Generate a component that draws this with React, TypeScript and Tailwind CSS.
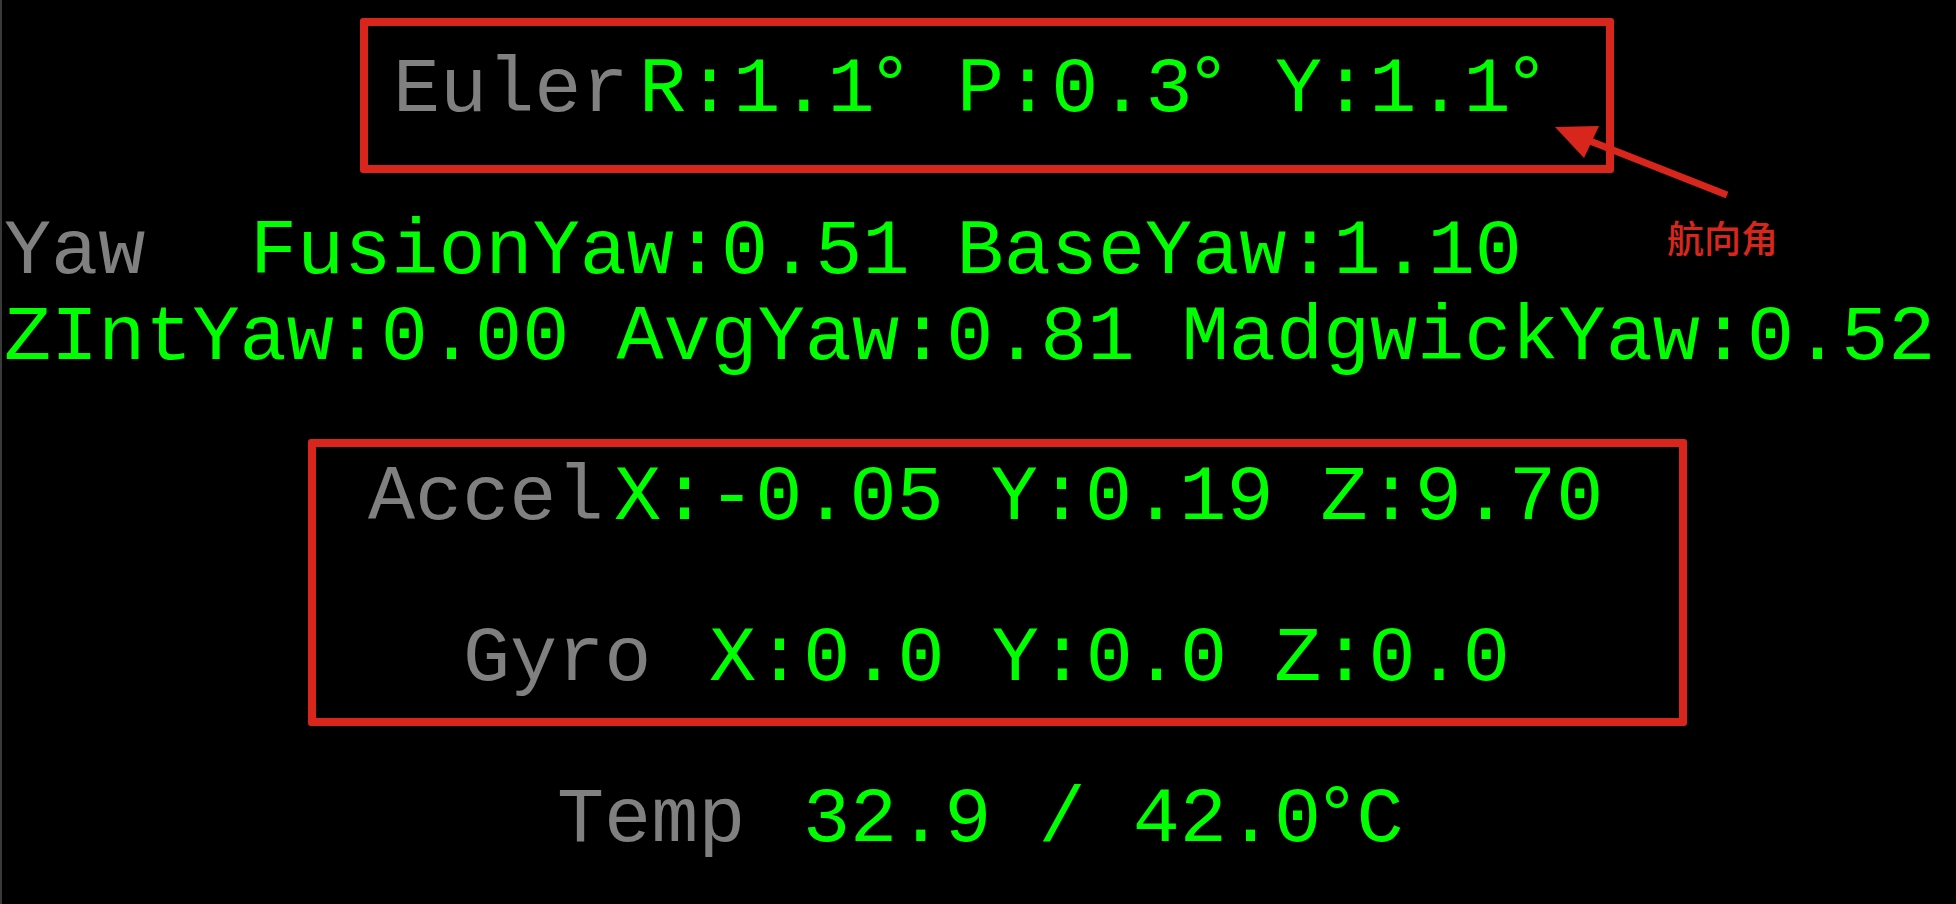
import React from "react";

const Deg = () => <span className="pr-[4px] font-['Liberation_Sans',sans-serif] leading-[0px]">°</span>;

export default function App() {
  return (
    <div className="relative flex h-[904px] w-[1956px] overflow-hidden bg-black font-['Liberation_Mono','Courier_New',monospace] text-[78.5px] leading-[86px] whitespace-pre">
      <div className="w-[2px] shrink-0 bg-[#3a3a3a]" />
      <div className="flex flex-col pt-[18px]">
        {/* Euler box */}
        <div className="ml-[358px] flex w-[1254px] items-baseline rounded-[3px] border-[8px] border-[#d9261c] pb-[31px] pl-[25px] pt-[22px]">
          <span className="w-[246px] shrink-0 text-[#808080]">Euler</span>
          <span className="text-[#00ff00]">
            R:1.1<Deg /> P:0.3<Deg /> Y:1.1<Deg />
          </span>
        </div>

        {/* Yaw lines */}
        <div className="mt-[37px] flex items-baseline pl-[2px]">
          <span className="w-[246px] shrink-0 text-[#808080]">Yaw</span>
          <span className="text-[#00ff00]">FusionYaw:0.51 BaseYaw:1.10</span>
        </div>
        <div className="flex pl-[2px] text-[#00ff00]">ZIntYaw:0.00 AvgYaw:0.81 MadgwickYaw:0.52</div>

        {/* Accel / Gyro box */}
        <div className="ml-[306px] mt-[57px] flex w-[1379px] flex-col rounded-[3px] border-[8px] border-[#d9261c] pb-[15px] pt-[9px]">
          <div className="flex items-baseline pl-[52px]">
            <span className="w-[246px] shrink-0 text-[#808080]">Accel</span>
            <span className="text-[#00ff00]">X:-0.05 Y:0.19 Z:9.70</span>
          </div>
          <div className="mt-[75px] flex items-baseline pl-[147px]">
            <span className="w-[246px] shrink-0 text-[#808080]">Gyro</span>
            <span className="text-[#00ff00]">X:0.0 Y:0.0 Z:0.0</span>
          </div>
        </div>

        {/* Temp */}
        <div className="mt-[52px] flex items-baseline pl-[555px]">
          <span className="w-[246px] shrink-0 text-[#808080]">Temp</span>
          <span className="text-[#00ff00]">
            32.9 / 42.0<Deg />C
          </span>
        </div>
      </div>

      {/* annotation arrow */}
      <svg className="pointer-events-none absolute left-0 top-0" width="1956" height="904" viewBox="0 0 1956 904">
        <line x1="1590" y1="141" x2="1727" y2="195" stroke="#d9261c" strokeWidth="7" />
        <polygon points="1555,127 1599,126 1584,158" fill="#d9261c" />
      </svg>
      <div className="absolute left-[1667px] top-[217px] font-['Noto_Sans_CJK_SC',sans-serif] text-[37px] font-medium leading-[40px] text-[#d9261c]">
        航向角
      </div>
    </div>
  );
}
